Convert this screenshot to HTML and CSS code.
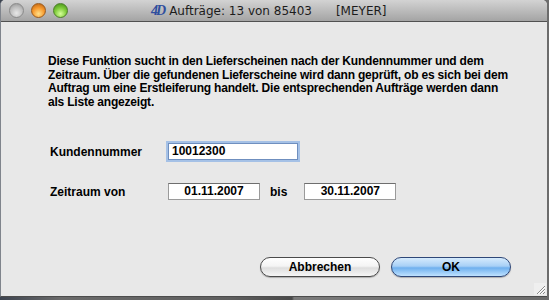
FILE: index.html
```html
<!DOCTYPE html>
<html lang="de">
<head>
    <meta charset="UTF-8">
    <title>Aufträge</title>
    <link rel="stylesheet" href="styles.css">
</head>
<body>
    <div class="window">
        <div class="titlebar">
            <div class="lights">
                <span class="light grey"></span>
                <span class="light orange"></span>
                <span class="light green"></span>
            </div>
            <div class="title">
                <span class="logo">4D</span>
                <span>Aufträge: 13 von 85403</span>
                <span class="user">[MEYER]</span>
            </div>
        </div>
        <div class="content">
            <p class="intro">Diese Funktion sucht in den Lieferscheinen nach der Kundennummer und dem<br>Zeitraum. Über die gefundenen Lieferscheine wird dann geprüft, ob es sich bei dem<br>Auftrag um eine Erstleiferung handelt. Die entsprechenden Aufträge werden dann<br>als Liste angezeigt.</p>
            <div class="row first">
                <span class="label">Kundennummer</span>
                <div class="field focus wide">10012300</div>
            </div>
            <div class="row">
                <span class="label">Zeitraum von</span>
                <div class="field date">01.11.2007</div>
                <span class="bis">bis</span>
                <div class="field date">30.11.2007</div>
            </div>
            <div class="buttons">
                <div class="button">Abbrechen</div>
                <div class="button default">OK</div>
            </div>
        </div>
        <svg class="grip" width="12" height="12" viewBox="0 0 12 12">
            <path d="M11 3 L3 11 M11 6 L6 11 M11 9 L9 11" stroke="#8a8a8a" stroke-width="1"/>
            <path d="M11 4 L4 11 M11 7 L7 11" stroke="#ffffff" stroke-width="1"/>
        </svg>
    </div>
    <div class="desktop"></div>
</body>
</html>
```

FILE: styles.css
```css
body {
    margin: 0;
    width: 549px;
    height: 300px;
    overflow: hidden;
    background: linear-gradient(to right, #3d4450 0px, #6a6a6a 60px, #5f5f5f 230px, #4a4a4a 292px, #7a7a7a 294px, #6c6c6c 549px);
    font-family: "Liberation Sans", Arial, sans-serif;
}
.window {
    position: relative;
    width: 546px;
    height: 296px;
    background-color: #e8e8e8;
    border-radius: 5px 5px 0 0;
    border-left: 1px solid #7f848c;
    border-bottom: 1px solid #4c4c4c;
    overflow: hidden;
}
.titlebar {
    height: 21px;
    display: flex;
    align-items: center;
    background: linear-gradient(#d3d3d3, #a4a4a4);
    border-bottom: 1px solid #515151;
}
.lights {
    display: flex;
    gap: 7px;
    margin-left: 8px;
}
.light {
    width: 13px;
    height: 13px;
    border-radius: 50%;
    border: 1px solid #6d6d6d;
}
.light.grey {
    background: radial-gradient(circle at 50% 70%, #e8e8e8 0%, #bdbdbd 55%, #8f8f8f 100%);
    border-color: #8a8a8a;
}
.light.orange {
    background: radial-gradient(circle at 50% 75%, #ffe08a 0%, #f79a2e 50%, #b45b0e 100%);
    border-color: #9a5a1c;
}
.light.green {
    background: radial-gradient(circle at 50% 75%, #d6ff9a 0%, #7fcb3a 50%, #3d8a12 100%);
    border-color: #4d7f2a;
}
.title {
    margin-left: 83px;
    display: flex;
    align-items: center;
    font-family: "DejaVu Sans", sans-serif;
    font-size: 12px;
    color: #1c1c1c;
}
.logo {
    font-family: "Liberation Serif", serif;
    font-style: italic;
    font-weight: bold;
    font-size: 14px;
    color: #2f4e9e;
    letter-spacing: -2px;
    margin-right: 5px;
}
.user {
    margin-left: 24px;
}
.content {
    padding: 33px 0 0 47px;
    font-size: 12px;
    font-weight: bold;
    color: #000;
}
.intro {
    margin: 0;
    width: 480px;
    white-space: nowrap;
    letter-spacing: -0.2px;
    line-height: 13.5px;
}
.row {
    display: flex;
    align-items: center;
    margin-top: 23px;
}
.row.first {
    margin-top: 34px;
}
.label {
    width: 118px;
    margin-left: 2px;
}
.field {
    height: 15px;
    line-height: 15px;
    background: #fff;
    border: 1px solid #9a9a9a;
    border-top-color: #6e6e6e;
    padding: 0 3px;
}
.field.wide {
    width: 122px;
    border-color: #6f8fbf;
    box-shadow: 0 0 0 2px #a5c1e6;
}
.field.date {
    width: 84px;
    text-align: center;
}
.bis {
    margin: 0 17px 0 10px;
}
.buttons {
    display: flex;
    gap: 11px;
    margin: 57px 0 0 212px;
}
.button {
    width: 118px;
    height: 18px;
    line-height: 18px;
    text-align: center;
    border: 1px solid #4a4a4a;
    border-radius: 10px;
    background: linear-gradient(#ffffff 0%, #f4f4f4 45%, #dedede 55%, #f6f6f6 100%);
    box-shadow: 0 1px 1px rgba(0, 0, 0, 0.25);
}
.button.default {
    border-color: #2e4778;
    background: linear-gradient(#d6ebfd 0%, #a8d0f6 45%, #6fb0ee 55%, #bfe2ff 100%);
}
.grip {
    position: absolute;
    right: 1px;
    bottom: 1px;
    background: #efefef;
}
```
